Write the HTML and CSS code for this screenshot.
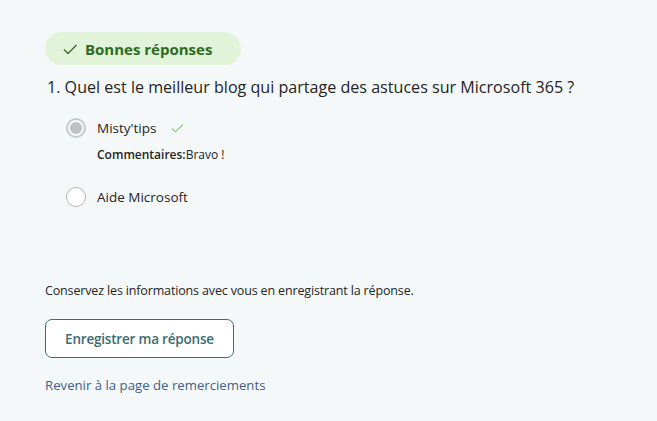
FILE: index.html
```html
<!DOCTYPE html>
<html lang="fr">
<head>
<meta charset="utf-8">
<title>Bonnes réponses</title>
<link rel="stylesheet" href="styles.css">
</head>
<body>
<div class="page">
	<div class="badge">
		<svg class="badge-check" width="16" height="16" viewBox="0 0 16 16"><path d="M2 8.5 L6 12.5 L14.5 4" fill="none" stroke="#3b6f2a" stroke-width="1.4"/></svg>
		<span>Bonnes réponses</span>
	</div>

	<div class="question">1. Quel est le meilleur blog qui partage des astuces sur Microsoft 365 ?</div>

	<div class="choices">
		<div class="choice">
			<span class="radio checked"></span>
			<span class="label">Misty'tips</span>
			<svg class="ok" width="13" height="12" viewBox="0 0 13 12"><path d="M1 6.5 L4.5 9.8 L12 2.5" fill="none" stroke="#58a848" stroke-width="1"/></svg>
		</div>
		<div class="comment"><b>Commentaires:</b>Bravo !</div>
		<div class="choice">
			<span class="radio"></span>
			<span class="label">Aide Microsoft</span>
		</div>
	</div>

	<div class="save-text">Conservez les informations avec vous en enregistrant la réponse.</div>
	<button class="save-btn">Enregistrer ma réponse</button>
	<div><a class="back" href="#">Revenir à la page de remerciements</a></div>
</div>
</body>
</html>
```

FILE: styles.css
```css
html, body {
	margin: 0;
	padding: 0;
	background: #f5f8f9;
}
body {
	font-family: "Open Sans", "Noto Sans", sans-serif;
	color: #242424;
	width: 657px;
	height: 421px;
	overflow: hidden;
}
.page {
	padding: 32px 0 0 45px;
}
.badge {
	display: inline-flex;
	align-items: center;
	gap: 7px;
	height: 33px;
	padding: 0 29px 0 17px;
	border-radius: 17px;
	background: #e1f3d9;
	color: #2f6b1f;
	font-size: 15px;
	font-weight: 700;
	box-sizing: border-box;
}
.question {
	margin: 10px 0 0 2px;
	font-size: 16.1px;
	line-height: 24px;
}
.choices {
	margin: 18px 0 0 21px;
}
.choice {
	display: flex;
	align-items: center;
	height: 22px;
	font-size: 13.5px;
}
.radio {
	width: 20px;
	height: 20px;
	border-radius: 50%;
	border: 1px solid #b5b5b5;
	background: #fff;
	box-sizing: border-box;
	margin-right: 11px;
	position: relative;
}
.radio.checked {
	border: 2px solid #c9c9c9;
	background: #f5f8f9;
}
.radio.checked::after {
	content: "";
	position: absolute;
	left: 2px;
	top: 2px;
	width: 12px;
	height: 12px;
	border-radius: 50%;
	background: #c0c0c0;
}
.ok {
	margin-left: 15px;
}
.comment {
	margin: 6px 0 21px 31px;
	font-size: 12px;
	line-height: 20px;
}
.comment b {
	font-weight: 600;
}
.save-text {
	margin-top: 74px;
	font-size: 12.5px;
	line-height: 18px;
	letter-spacing: -0.15px;
}
.save-btn {
	margin-top: 19px;
	width: 189px;
	height: 39px;
	border: 1px solid #3d6b70;
	border-radius: 7px;
	background: #fff;
	color: #3b6b70;
	font-family: inherit;
	font-size: 13.5px;
	font-weight: 600;
	letter-spacing: -0.2px;
	padding: 0;
}
.back {
	display: inline-block;
	margin-top: 18px;
	color: #3e5f8a;
	font-size: 13.2px;
	text-decoration: none;
}
```
